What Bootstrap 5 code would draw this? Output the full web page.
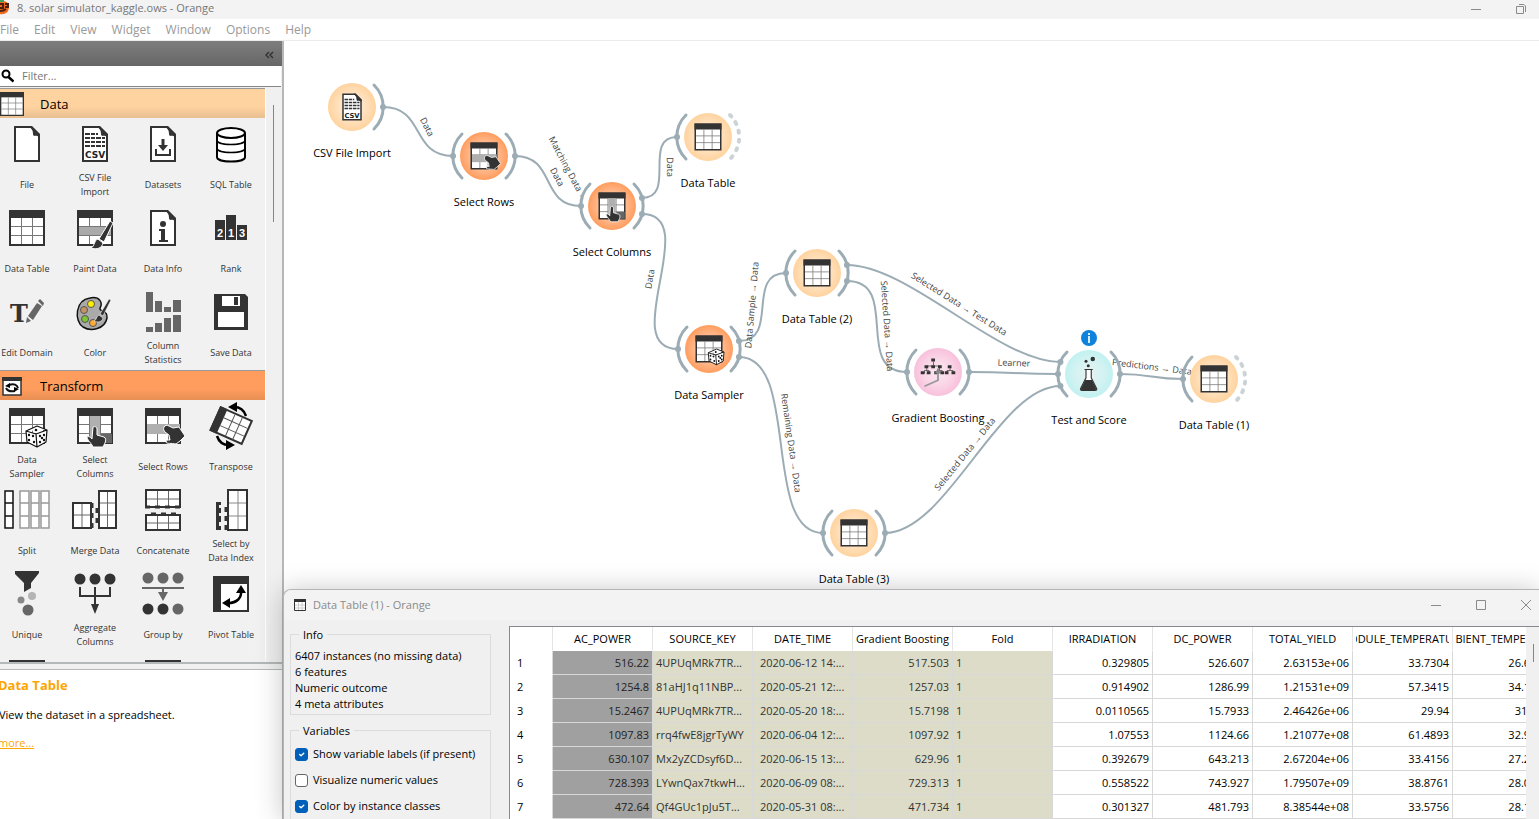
<!DOCTYPE html>
<html lang="en">
<head>
<meta charset="utf-8">
<meta name="viewport" content="width=device-width, initial-scale=1">
<title>8. solar simulator_kaggle.ows - Orange</title>
<link href="https://cdn.jsdelivr.net/npm/bootstrap@5.3.0/dist/css/bootstrap.min.css" rel="stylesheet">
<style>
  body { font: 11px/16px "Open Sans", "Noto Sans", sans-serif; color: #000; background: #fff; }
  .app { height: 100vh; }
  button { border: 0; background: none; padding: 0; color: inherit; line-height: 1; }
  .titlebar { height: 19px; background: #f3f3f3; color: #777; font-size: 11px; padding-bottom: 3px; }
  .titlebar .logo { width: 9px; height: 16px; }
  .win-btns { color: #8a8a8a; gap: 33px; }
  .menus { height: 22px; gap: 15px; border-bottom: 1px solid #ececec; font-size: 12px; }
  .menus a { color: #999; text-decoration: none; }
  .dock { width: 284px; background: #f0f0f0; border-right: 2px solid #b4b8b8; }
  .dock-head { height: 25px; background: linear-gradient(#7e7e7e, #666); color: #333; padding-right: 8px; }
  .finder { height: 21px; border-bottom: 1px solid #868686; margin-right: 1px; }
  .finder input { border: 0; outline: 0; padding: 0; font-size: 11px; background: transparent; }
  .finder input::placeholder { color: #777; opacity: 1; }
  .toolbox { border-bottom: 2px solid #b4b8b8; margin-top: 1px; height: 576px; }
  .tools { width: 266px; border-right: 1px solid #fff; background: #f1f1f1; }
  .cat { height: 30px; border-top: 1px solid #999; font-size: 13px; gap: 16px; }
  .cat-data { background: linear-gradient(#ffd39f 60%, #e8bf91); }
  .cat-transform { background: linear-gradient(#ff9d5e 60%, #e88f55); }
  .cells { display: grid; grid-template-columns: repeat(4, 68px); grid-auto-rows: 84px; justify-content: end; }
  .tool { padding-top: 2px; font-size: 9px; line-height: 14px; color: #333; }
  .tool svg { width: 48px; height: 48px; flex: none; }
  .tool .cap { height: 34px; }
  .thumb { width: 1px; background: #858585; }
  .scroll-l { height: 117px; margin: 17px 8px 0 0; }
  .about { border-top: 1px solid #b4b8b8; background: #fff; margin-top: 5px; }
  .about h2 { font-size: 13px; line-height: 18px; font-weight: 700; color: #ffa500; margin: 6px 0 13px -2px; }
  .about p { margin: 0 0 12px -1px; }
  .about a { color: #ffa500; margin-left: -2px; }
  .scene text { fill: #000; text-anchor: middle; }
  .scene .wire { fill: none; stroke: #9cacb4; stroke-width: 2; }
  .scene .arc { fill: none; stroke: #9cacb4; stroke-width: 3; stroke-linecap: round; }
  .scene .arc.open { stroke: #ccd3d6; stroke-width: 4; stroke-dasharray: 2 7; }
  .scene .dot { fill: #9cacb4; }
  .scene .wire-label { fill: #444; font-size: 9px; }
  .dialog-win { position: absolute; left: 283px; right: 0; top: 589px; bottom: 0; background: #f0f0f0; border: 1px solid #b5b5b5; border-width: 1px 0 0 1px; border-radius: 8px 0 0 0; box-shadow: 0 2px 28px rgba(0,0,0,.24); }
  .dialog-head { height: 30px; background: #f3f3f3; color: #8a8a8a; font-size: 11px; padding: 0 7px 1px 10px; gap: 7px; border-radius: 8px 0 0 0; }
  .side { width: 201px; margin: 7px 18px 0 6px; }
  .group { position: relative; border: 1px solid #dcdcdc; padding: 13px 4px 2px; margin: 7px 0 15px; }
  .group legend { position: absolute; top: -8px; left: 8px; width: auto; padding: 0 4px; margin: 0; font-size: 11px; line-height: 16px; background: #f0f0f0; }
  .group label { height: 26px; gap: 5px; }
  .group .form-check-input { width: 13px; height: 13px; margin: 0; border: 1px solid #666; border-radius: 3px; background-size: 9px; flex: none; }
  .group .form-check-input:checked { background-color: #005fb8; border-color: #005fb8; }
  .sheet { border: solid #868a90; border-width: 1px 0 0 1px; background: #fff; margin-top: 6px; }
  .grid-data { table-layout: fixed; width: 1043px; border-collapse: separate; border-spacing: 0; }
  .grid-data th, .grid-data td { height: 24px; padding: 0 3px; border: solid #d8d8d8; border-width: 0 1px 1px 0; font-weight: 400; text-align: right; overflow: hidden; white-space: nowrap; line-height: 22px; }
  .grid-data thead th { border-bottom-color: transparent; border-right-color: #e4e4e4; background-clip: padding-box; }
  .grid-data thead th div { display: flex; justify-content: center; overflow: hidden; }
  .grid-data tbody th { text-align: left; padding-left: 7px; border-bottom-color: #fff; }
  .grid-data .target { background: #a0a0a0; color: #222; }
  .grid-data .meta { background: #dcdcc8; color: #333; }
  .grid-data .txt { text-align: left; }
  .grid-data .date { text-align: left; padding-left: 7px; }
  .gutter { width: 13px; background: #f0f0f0; padding: 17px 0 0 7px; }
  .gutter .thumb { height: 18px; }
</style>
</head>
<body>
<svg class="position-absolute" width="0" height="0" aria-hidden="true">
  <defs>
    <radialGradient id="g-data"><stop offset="0" stop-color="#fff0de"/><stop offset=".6" stop-color="#ffe0bc"/><stop offset="1" stop-color="#ffd39f"/></radialGradient>
    <radialGradient id="g-transform"><stop offset="0" stop-color="#ffd8c0"/><stop offset=".6" stop-color="#ffb88c"/><stop offset="1" stop-color="#ff9d5e"/></radialGradient>
    <radialGradient id="g-model"><stop offset="0" stop-color="#fbe8f1"/><stop offset=".6" stop-color="#fad4e6"/><stop offset="1" stop-color="#f8c0dc"/></radialGradient>
    <radialGradient id="g-eval"><stop offset="0" stop-color="#e6f2f2"/><stop offset=".6" stop-color="#d4f2f2"/><stop offset="1" stop-color="#c1f1f1"/></radialGradient>
  </defs>
  <symbol id="table" viewBox="0 0 48 48"><path fill="#fff" stroke="#333" stroke-width="2" d="M7 7h34v34H7z"/><path fill="#333" d="M6 6h36v8H6z"/><path stroke="#777" d="M18.500 14v26M29.500 14v26M8 22.500h32M8 31.500h32"/></symbol>
  <symbol id="file" viewBox="0 0 48 48"><path fill="#fff" stroke="#333" stroke-width="2" d="M12 7h16l8 8v26H12z"/><path fill="#333" d="M26 6h3l8 8v3c-4-2-7 0-7-3s-1-6-4-8z"/></symbol>
  <symbol id="csv" viewBox="0 0 48 48"><use href="#file"/><path stroke="#333" stroke-width="2" stroke-dasharray="5 1 4 1 5 1 4" d="M14 14h13M14 18h20M14 22h20M14 26h20"/><text x="24" y="38" text-anchor="middle" font-family="DejaVu Sans" font-weight="700" font-size="9" fill="#222">CSV</text></symbol>
  <symbol id="datasets" viewBox="0 0 48 48"><use href="#file"/><path fill="none" stroke="#333" stroke-width="2" d="M17 29v6h14v-6"/><path fill="#333" d="M22.500 19h3v6H29l-5 6-5-6h3.500z"/></symbol>
  <symbol id="sql" viewBox="0 0 48 48"><path fill="#fff" stroke="#000" stroke-width="2" d="M10 13v24c0 6 28 6 28 0V13"/><ellipse cx="24" cy="13" rx="14" ry="5" fill="#fff" stroke="#000" stroke-width="2"/><path fill="none" stroke="#000" stroke-width="1.500" d="M10 20c0 6 28 6 28 0M10 28c0 6 28 6 28 0"/></symbol>
  <symbol id="brush" viewBox="0 0 48 48"><path fill="#333" stroke="#fff" d="M39 17l3 2-9 19-5-3zM27 35l5 4c-1 5-6 7-12 5 4-2 3-8 7-9z"/></symbol>
  <symbol id="paint" viewBox="0 0 48 48"><use href="#table"/><path fill="#aaa" d="M8 23h32v8H8z"/><use href="#brush"/></symbol>
  <symbol id="info" viewBox="0 0 48 48"><use href="#file"/><circle cx="24" cy="20" r="3" fill="#333"/><path fill="#333" d="M20 25h6v11h3v2h-9v-2h2v-9h-2z"/></symbol>
  <symbol id="rank" viewBox="0 0 48 48"><path fill="#333" d="M8 16h10v20H8zM19 11h10v25H19zM30 21h10v15H30z"/><g fill="#fff" font-family="Liberation Sans" font-weight="700" font-size="11" text-anchor="middle"><text x="13" y="33">2</text><text x="24" y="33">1</text><text x="35" y="33">3</text></g></symbol>
  <symbol id="edit" viewBox="0 0 48 48"><text x="7" y="34" font-family="DejaVu Serif" font-weight="700" font-size="24" fill="#333">T</text><path fill="#666" d="M34 15l5 3-9 14-5-4zM35 13l2-2 4 4-1 3zM24 29l4 4-5 2z"/></symbol>
  <symbol id="color" viewBox="0 0 48 48"><path fill="#aaa" stroke="#111" stroke-width="1.500" d="M19 10c10-2 13 5 10 10-1 5 8 1 7 10-2 11-16 14-24 9C3 33 4 12 19 10z"/><g stroke="#555"><circle cx="20" cy="16" r="3.500" fill="#fe0"/><circle cx="13" cy="22" r="3.500" fill="#c49464"/><circle cx="14" cy="31" r="3.500" fill="#7ec636"/><circle cx="22" cy="35" r="3.500" fill="#fa3"/></g><path fill="#333" stroke="#fff" stroke-width=".6" d="M38 11l2 1-8 16-3-2zM28 27l4 3c-1 4-5 5-9 3 3-1 2-5 5-6z"/></symbol>
  <symbol id="stats" viewBox="0 0 48 48"><path fill="#666" d="M7 4h7v20H7zM16 13h7v11h-7zM25 19h7v5h-7zM34 12h8v12h-8zM7 39h7v5H7zM16 35h7v9h-7zM25 30h7v14h-7zM34 27h8v17h-8z"/></symbol>
  <symbol id="save" viewBox="0 0 48 48"><path fill="#333" d="M7 6h31l3 3v33H7z"/><path fill="#fff" d="M15 8h18v10H15zM11 24h26v15H11z"/><path fill="#333" d="M27 9h4v8h-4z"/></symbol>
  <symbol id="dice" viewBox="0 0 48 48"><path fill="#fff" stroke="#111" stroke-linejoin="round" stroke-width="1.200" d="M34 24l10 4-1 12-9 5-10-5-1-11zM23 29l10 3 11-4M33 32l1 13"/><g fill="#111"><circle cx="33" cy="28" r="1.300"/><circle cx="26" cy="33" r="1.200"/><circle cx="30" cy="34" r="1.200"/><circle cx="26" cy="38" r="1.200"/><circle cx="31" cy="40" r="1.200"/><circle cx="37" cy="34" r="1.200"/><circle cx="41" cy="33" r="1.200"/><circle cx="39" cy="36" r="1.200"/><circle cx="37" cy="40" r="1.200"/><circle cx="41" cy="38" r="1.200"/></g></symbol>
  <symbol id="sampler" viewBox="0 0 48 48"><use href="#table"/><use href="#dice"/></symbol>
  <symbol id="hand" viewBox="0 0 48 48"><path fill="#333" stroke="#fff" d="M22 25c2-1 4 0 4 2v6l7 2c2 1 2 3 1 6l-2 4H22c-1-3-4-5-6-9 0-2 3-2 5 1z"/></symbol>
  <symbol id="columns" viewBox="0 0 48 48"><use href="#table"/><path fill="#b0b0b0" d="M19 14h10v26H19z"/><path fill="#666" d="M30 32h11v9H30z"/><use href="#hand"/></symbol>
  <symbol id="rows" viewBox="0 0 48 48"><use href="#table"/><path fill="#b0b0b0" d="M8 22h33v10H8z"/><path fill="#333" stroke="#fff" d="M25 25c1-2 3-2 5-1l4 2 6-1 6 9-5 5-4 3c-4-1-10 0-10-2 0-2 2-2 4-2l-1-5-4-3c-1-1-2-3-1-5z"/></symbol>
  <symbol id="transpose" viewBox="0 0 48 48"><g transform="rotate(24 24 24)"><path fill="#fff" stroke="#333" stroke-width="2" d="M7 11h34v25H7z"/><path fill="#333" d="M6 10h8v27H6z"/><path stroke="#555" d="M23 12v24M31 12v24M14 19.500h26M14 28h26"/></g><path fill="none" stroke="#000" stroke-width="2.500" d="M27 5c6 0 10 3 12 9M22 43c-6 0-10-3-12-9"/><path d="M21 5l9-5v10zM28 43l-9-5v10z"/></symbol>
  <symbol id="split" viewBox="0 0 48 48"><path fill="#fff" stroke="#111" stroke-width="1.500" d="M2 5h8v37H2zM2 17h8M2 30h8"/><path fill="#fff" stroke="#999" stroke-width="1.500" d="M17 5h9v37h-9zM28 5h8v37h-8zM38 5h8v37h-8zM17 17h9M17 30h9M28 17h8M28 30h8M38 17h8M38 30h8"/></symbol>
  <symbol id="merge" viewBox="0 0 48 48"><path fill="#fff" stroke="#333" stroke-width="2" d="M2 17h18v25H2zM28 5h17v37H28z"/><path stroke="#666" d="M11 18v23M3 29h16M36.500 6v35M29 17h15M29 29h15"/><path stroke="#333" stroke-width="3" stroke-dasharray="5 5" d="M21 17v25M26 22v20"/></symbol>
  <symbol id="concat" viewBox="0 0 48 48"><path fill="#fff" stroke="#333" stroke-width="2" d="M7 4h34v17H7zM7 29h34v15H7z"/><path stroke="#666" d="M18.500 5v15M29.500 5v15M8 13h32M18.500 30v13M29.500 30v13M8 37h32"/><path stroke="#333" stroke-width="3" stroke-dasharray="5 5" d="M6 21h36M12 28h30"/></symbol>
  <symbol id="byindex" viewBox="0 0 48 48"><path fill="#fff" stroke="#333" stroke-width="2" d="M21 4h19v40H21z"/><path stroke="#888" d="M31 5v38M22 17h17M22 30h17"/><path fill="#333" d="M9 16h5v3h-2v3h2v5h-2v3h2v6h-2v4h2v4H9z"/><path stroke="#333" stroke-width="3" stroke-dasharray="5 4" d="M19 21v23"/></symbol>
  <symbol id="unique" viewBox="0 0 48 48"><path fill="#333" d="M12 1h24v2l-8 10v5l-7 4v-9L12 4z"/><circle cx="29" cy="26" r="4" fill="#b4b4b4"/><circle cx="18" cy="30" r="3.500" fill="#888"/><circle cx="25" cy="40" r="5.500" fill="#666"/></symbol>
  <symbol id="aggregate" viewBox="0 0 48 48"><g fill="#333"><circle cx="9" cy="9" r="5.500"/><circle cx="24" cy="9" r="5.500"/><circle cx="39" cy="9" r="5.500"/><path d="M20 34h8l-4 10z"/></g><path fill="none" stroke="#333" stroke-width="2" d="M9 17v9h30v-9M24 17v19"/></symbol>
  <symbol id="groupby" viewBox="0 0 48 48"><g fill="#666"><circle cx="9" cy="8" r="5.500"/><circle cx="24" cy="8" r="5.500"/><circle cx="39" cy="8" r="5.500"/><circle cx="39" cy="39" r="5.500"/><path d="M3 17h42v2H3zM23 18h2v4h4l-5 9-5-9h4z"/></g><circle cx="9" cy="39" r="5.500" fill="#333"/><circle cx="24" cy="39" r="5.500" fill="#333"/></symbol>
  <symbol id="pivot" viewBox="0 0 48 48"><path fill="#333" d="M6 6h36v36H6z"/><path fill="#fff" d="M14 14h26v26H14z"/><path fill="none" stroke="#000" stroke-width="2.500" d="M34 20c1 8-4 13-13 13"/><path d="M29 23l5-8 5 8zM23 28l-8 5 8 5z"/></symbol>
  <symbol id="boost" viewBox="0 0 48 48"><path fill="none" stroke="#444" d="M18 10v5M9 22v-6h17v6M6 26v-4h6v4M24 26v-4h6M40 18v4M36 26v-4h8v4"/><g fill="#333"><path d="M15 6h5v4h-5zM6 15h5v4H6zM15 15h5v4h-5zM24 15h5v4h-5zM1 23h5v4H1zM9 23h5v4H9zM19 23h5v4h-5zM27 23h5v4h-5zM37 15h5v4h-5zM33 23h5v4h-5zM42 23h5v4h-5z"/></g><path fill="none" stroke="#999" stroke-width="2.500" d="M6 43l18-8V24"/><path fill="#888" d="M20 26l4-8 4 8z"/></symbol>
  <symbol id="flask" viewBox="0 0 48 48"><g fill="#333"><circle cx="20" cy="7" r="2"/><circle cx="29" cy="4" r="3"/><circle cx="23" cy="13" r="2"/></g><path fill="#fff" stroke="#333" stroke-width="1.500" d="M18 18h11M20 18v11l-7 14c-1 2 0 3 2 3h17c2 0 3-1 2-3l-7-14V18"/><path fill="#333" d="M19 32h9l6 12-2 2H14l-1-2z"/></symbol>
</svg>

<div class="app d-flex flex-column position-relative overflow-hidden">
  <header class="titlebar d-flex align-items-center">
    <svg class="logo" viewBox="0 0 9 16"><path fill="#f06a1c" d="M0 2c6-2 9 1 9 5 0 5-4 8-9 7z"/><path fill="#3ca55c" d="M0 0h4v2H0z"/><path stroke="#4b2010" stroke-width="2" fill="none" d="M0 4h3v4H0M5 4h3v3H5M0 11c3 0 5-1 6-2"/></svg>
    <span class="ms-2">8. solar simulator_kaggle.ows - Orange</span>
    <div class="win-btns d-flex align-items-center ms-auto me-2 pe-1">
      <button aria-label="Minimize"><svg width="12" height="12" viewBox="0 0 12 12"><path stroke="currentColor" d="M1 6.500h10"/></svg></button>
      <button aria-label="Restore"><svg width="12" height="12" viewBox="0 0 12 12"><path fill="none" stroke="currentColor" d="M1.500 3.500h7v7h-7zM4 1.500h5l1.500 1.500v6"/></svg></button>
    </div>
  </header>
  <nav class="menus d-flex align-items-center">
    <a href="#">File</a><a href="#">Edit</a><a href="#">View</a><a href="#">Widget</a><a href="#">Window</a><a href="#">Options</a><a href="#">Help</a>
  </nav>
  <div class="d-flex flex-fill overflow-hidden">
    <aside class="dock d-flex flex-column flex-shrink-0">
      <div class="dock-head d-flex align-items-center justify-content-end flex-shrink-0"><button aria-label="Collapse"><svg width="9" height="8" viewBox="0 0 9 8"><path fill="none" stroke="currentColor" stroke-width="1.500" d="M4 1L1 4l3 3M8 1L5 4l3 3"/></svg></button></div>
      <label class="finder d-flex align-items-center gap-2 bg-white flex-shrink-0">
        <svg width="14" height="14" viewBox="0 0 14 14"><circle cx="6" cy="5" r="3.500" fill="none" stroke="#000" stroke-width="2"/><path stroke="#000" stroke-width="2.500" d="M8.500 8l5 4.500"/></svg>
        <input type="text" placeholder="Filter..." aria-label="Filter">
      </label>
      <div class="toolbox d-flex overflow-hidden flex-shrink-0">
        <div class="tools overflow-hidden flex-shrink-0">
          <div class="cat cat-data d-flex align-items-center"><svg width="24" height="24" viewBox="6 6 36 36"><use href="#table" width="48" height="48"/></svg>Data</div>
          <div class="cells" id="cells-data"></div>
          <div class="cat cat-transform d-flex align-items-center"><svg width="24" height="24" viewBox="0 0 24 24"><path fill="#fff" stroke="#333" stroke-width="1.500" d="M3 4h18v17H3z"/><path fill="#333" d="M2 3h20v4H2z"/><path fill="none" stroke="#111" stroke-width="2" d="M9 11c5-2 8 0 9 3M15 17c-5 1-8-1-9-3"/><path d="M5 12l5-3v5zM19 15l-5-2v5z"/></svg>Transform</div>
          <div class="cells" id="cells-transform"></div>
        </div>
        <div class="thumb scroll-l ms-auto"></div>
      </div>
      <section class="about flex-fill">
        <h2>Data Table</h2>
        <p>View the dataset in a spreadsheet.</p>
        <a href="#">more...</a>
      </section>
    </aside>
    <main class="flex-fill overflow-hidden">
      <svg class="scene w-100 h-100 d-block" role="img" aria-label="Workflow"><g id="scene" transform="translate(-284 -41)"></g></svg>
    </main>
  </div>

  <section class="dialog-win d-flex flex-column overflow-visible">
    <div class="dialog-head d-flex align-items-center flex-shrink-0">
      <svg width="12" height="12" viewBox="0 0 12 12"><path fill="#fff" stroke="#333" d="M.5.5h11v11H.5z"/><path fill="#333" d="M0 0h12v3H0z"/><path stroke="#ccc" d="M4.500 3v8M8 3v8M1 6h10M1 9h10"/></svg>
      <span>Data Table (1) - Orange</span>
      <div class="win-btns d-flex align-items-center ms-auto">
        <button aria-label="Minimize"><svg width="12" height="12" viewBox="0 0 12 12"><path stroke="currentColor" d="M1 6.500h10"/></svg></button>
        <button aria-label="Maximize"><svg width="12" height="12" viewBox="0 0 12 12"><path fill="none" stroke="currentColor" d="M1.500 1.500h9v9h-9z"/></svg></button>
        <button aria-label="Close"><svg width="12" height="12" viewBox="0 0 12 12"><path stroke="currentColor" d="M1 1l10 10M11 1L1 11"/></svg></button>
      </div>
    </div>
    <div class="d-flex flex-fill overflow-hidden">
      <div class="side flex-shrink-0">
        <fieldset class="group"><legend>Info</legend>
          <div>6407 instances (no missing data)</div><div>6 features</div><div>Numeric outcome</div><div>4 meta attributes</div>
        </fieldset>
        <fieldset class="group pt-2"><legend>Variables</legend>
          <label class="d-flex align-items-center pt-1"><input class="form-check-input" type="checkbox" checked>Show variable labels (if present)</label>
          <label class="d-flex align-items-center pt-1"><input class="form-check-input" type="checkbox">Visualize numeric values</label>
          <label class="d-flex align-items-center pt-1"><input class="form-check-input" type="checkbox" checked>Color by instance classes</label>
        </fieldset>
      </div>
      <div class="sheet d-flex flex-fill overflow-hidden">
        <div class="flex-fill overflow-hidden">
          <table class="grid-data"><colgroup><col style="width:43px"></colgroup><thead><tr id="heads"><th></th></tr></thead><tbody id="rows-body"></tbody></table>
        </div>
        <div class="gutter flex-shrink-0"><div class="thumb"></div></div>
      </div>
    </div>
  </section>
</div>

<script>
  // Widget toolbox
  const tools = {
    data: [['file','File'],['csv','CSV File<br>Import'],['datasets','Datasets'],['sql','SQL Table'],['table','Data Table'],['paint','Paint Data'],['info','Data Info'],['rank','Rank'],['edit','Edit Domain'],['color','Color'],['stats','Column<br>Statistics'],['save','Save Data']],
    transform: [['sampler','Data<br>Sampler'],['columns','Select<br>Columns'],['rows','Select Rows'],['transpose','Transpose'],['split','Split'],['merge','Merge Data'],['concat','Concatenate'],['byindex','Select by<br>Data Index'],['unique','Unique'],['aggregate','Aggregate<br>Columns'],['groupby','Group by'],['pivot','Pivot Table'],['table',''],['',''],['table','']]
  };
  for (const k in tools) document.getElementById('cells-' + k).innerHTML = tools[k].map(([icon, name]) =>
    `<div class="tool d-flex flex-column align-items-center text-center text-nowrap"><svg><use href="#${icon}"/></svg><div class="cap d-flex align-items-center"><span>${name}</span></div></div>`).join('');

  // Workflow: nodes are [x, y, kind, icon, name, input anchors, output anchors]
  const nodes = {
    csv: [352,107,'data','csv','CSV File Import',0,1], sr: [484,156,'transform','rows','Select Rows',1,1],
    sc: [612,206,'transform','columns','Select Columns',1,2], dt: [708,137,'data','table','Data Table',1,-1],
    ds: [709,349,'transform','sampler','Data Sampler',1,2], dt2: [817,273,'data','table','Data Table (2)',1,2],
    gb: [938,372,'model','boost','Gradient Boosting',1,1], ts: [1089,374,'eval','flask','Test and Score',3,1],
    dt1: [1214,379,'data','table','Data Table (1)',1,-1], dt3: [854,533,'data','table','Data Table (3)',1,1]
  };
  const spread = { 1: [0], 2: [-8, 8], 3: [-12, 0, 12] };
  const anchor = (id, side, i) => {
    const n = nodes[id], dy = spread[n[side > 0 ? 6 : 5]][i];
    return [n[0] + side * Math.sqrt(31 * 31 - dy * dy), n[1] + dy];
  };
  const wires = [['csv',0,'sr',0],['sr',0,'sc',0],['sc',0,'dt',0],['sc',1,'ds',0],['ds',0,'dt2',0],['ds',1,'dt3',0],['dt2',0,'ts',0],['dt2',1,'gb',0],['gb',0,'ts',1],['dt3',0,'ts',2],['ts',0,'dt1',0]];
  const labels = [['Data',427,127,63],['Matching Data →',568,169,62],['Data',557,177,62],['Data',670,167,89],['Data',650,279,-80],['Data Sample → Data',752,305,-85],['Remaining Data → Data',791,443,82],['Selected Data → Test Data',959,304,32],['Selected Data → Data',887,326,86],['Learner',1014,363,2],['Selected Data → Data',965,454,-51],['Predictions → Data',1152,367,7]];
  let s = '';
  for (const [a, i, b, j] of wires) {
    const [x1, y1] = anchor(a, 1, i), [x2, y2] = anchor(b, -1, j), k = Math.min(62, Math.hypot(x2 - x1, y2 - y1) / 2);
    s += `<path class="wire" d="M${x1} ${y1}C${x1 + k} ${y1} ${x2 - k} ${y2} ${x2} ${y2}"/>`;
  }
  for (const [t, x, y, r] of labels) s += `<text class="wire-label" dy="3" transform="translate(${x} ${y}) rotate(${r})">${t}</text>`;
  for (const id in nodes) {
    const [x, y, kind, icon, name, ins, outs] = nodes[id];
    s += `<circle cx="${x}" cy="${y}" r="24" fill="url(#g-${kind})"/><use href="#${icon}" x="${x - 18}" y="${y - 18}" width="36" height="36"/>`;
    if (ins) s += `<path class="arc" d="M${x - 22} ${y - 22}A31 31 0 0 0 ${x - 22} ${y + 22}"/>`;
    if (outs) s += `<path class="arc${outs < 0 ? ' open' : ''}" d="M${x + 22} ${y - 22}A31 31 0 0 1 ${x + 22} ${y + 22}"/>`;
    for (let i = 0; i < ins; i++) { const [ax, ay] = anchor(id, -1, i); s += `<circle class="dot" cx="${ax}" cy="${ay}" r="3"/>`; }
    for (let i = 0; i < outs; i++) { const [ax, ay] = anchor(id, 1, i); s += `<circle class="dot" cx="${ax}" cy="${ay}" r="3"/>`; }
    s += `<text x="${x}" y="${y + 50}">${name}</text>`;
  }
  s += '<circle cx="1089" cy="338" r="8" fill="#0f83dc"/><path stroke="#d8ecff" stroke-width="2" d="M1089 336v7M1089 333v2"/>';
  document.getElementById('scene').innerHTML = s;

  // Data grid
  const heads = ['AC_POWER','SOURCE_KEY','DATE_TIME','Gradient Boosting','Fold','IRRADIATION','DC_POWER','TOTAL_YIELD','MODULE_TEMPERATURE','AMBIENT_TEMPERATURE'];
  const kinds = ['target','meta txt','meta date','meta','meta txt','','','','',''];
  const data = [
    ['516.22','4UPUqMRk7TR...','2020-06-12 14:...','517.503','1','0.329805','526.607','2.63153e+06','33.7304','26.6135'],
    ['1254.8','81aHJ1q11NBP...','2020-05-21 12:...','1257.03','1','0.914902','1286.99','1.21531e+09','57.3415','34.1842'],
    ['15.2467','4UPUqMRk7TR...','2020-05-20 18:...','15.7198','1','0.0110565','15.7933','2.46426e+06','29.94','31.725'],
    ['1097.83','rrq4fwE8jgrTyWY','2020-06-04 12:...','1097.92','1','1.07553','1124.66','1.21077e+08','61.4893','32.9207'],
    ['630.107','Mx2yZCDsyf6D...','2020-06-15 13:...','629.96','1','0.392679','643.213','2.67204e+06','33.4156','27.2461'],
    ['728.393','LYwnQax7tkwH...','2020-06-09 08:...','729.313','1','0.558522','743.927','1.79507e+09','38.8761','28.0318'],
    ['472.64','Qf4GUc1pJu5T...','2020-05-31 08:...','471.734','1','0.301327','481.793','8.38544e+08','33.5756','28.1590']
  ];
  document.getElementById('heads').innerHTML += heads.map(h => `<th><div><span>${h}</span></div></th>`).join('');
  document.getElementById('rows-body').innerHTML = data.map((r, i) => `<tr><th>${i + 1}</th>${r.map((v, c) => `<td class="${kinds[c]}">${v}</td>`).join('')}</tr>`).join('');
</script>
<script src="https://cdn.jsdelivr.net/npm/bootstrap@5.3.0/dist/js/bootstrap.bundle.min.js"></script>
</body>
</html>
